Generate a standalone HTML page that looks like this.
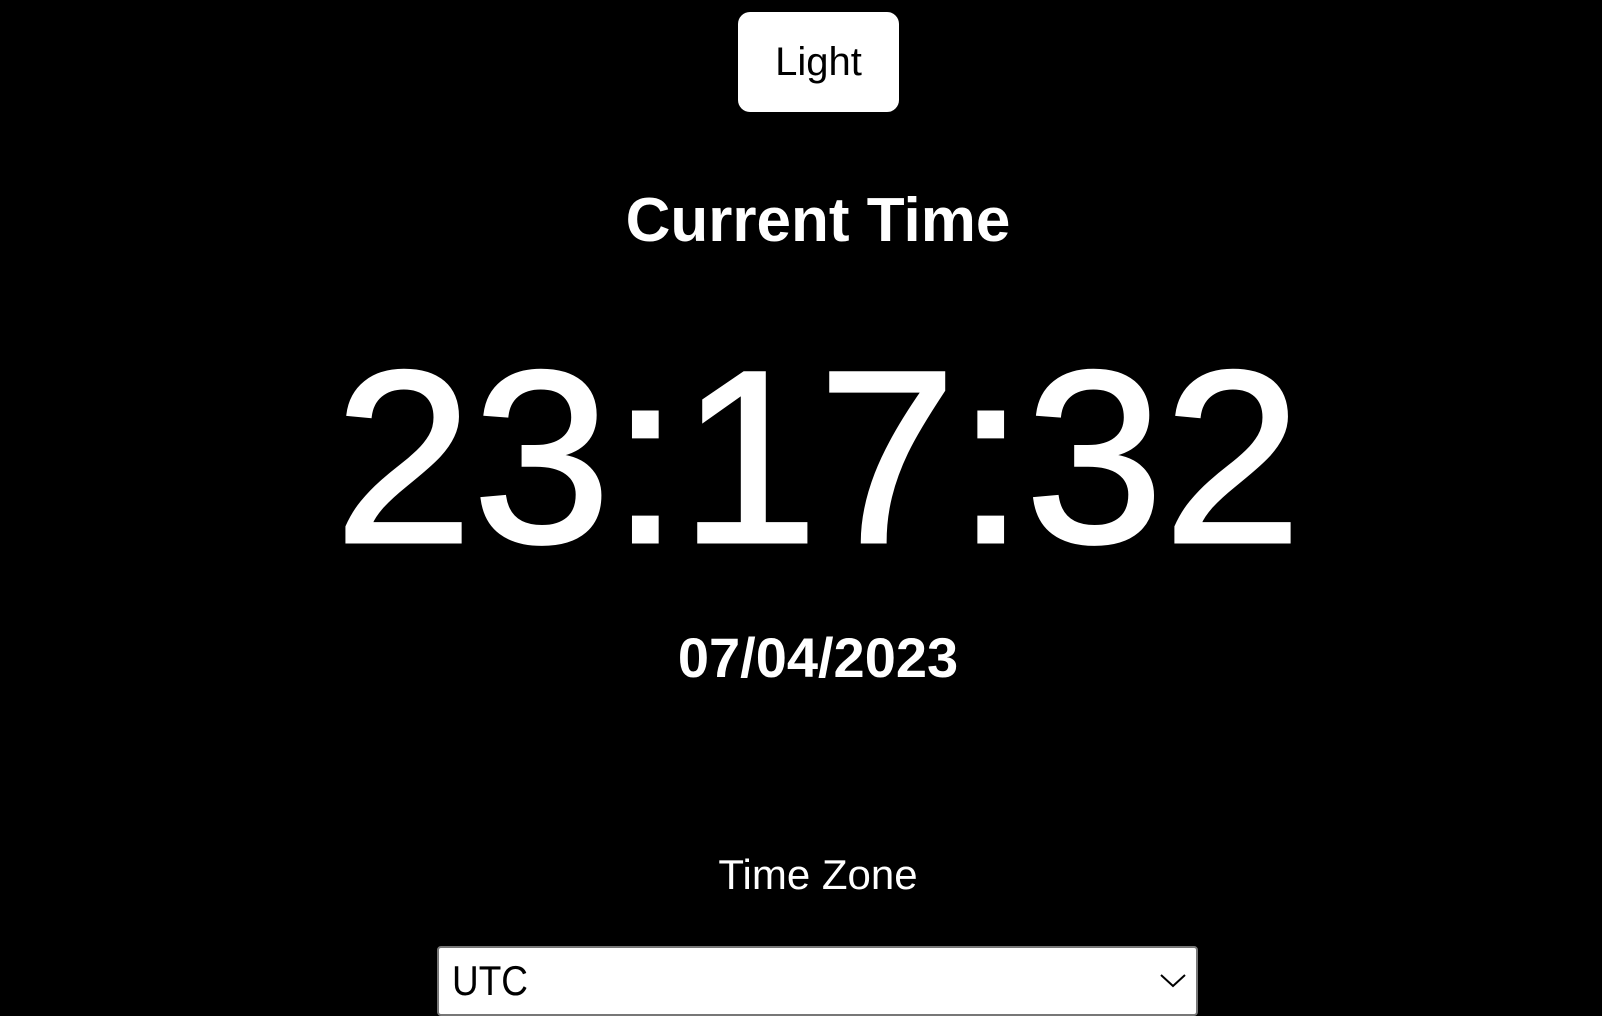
<!DOCTYPE html>
<html><head><style>
html,body{margin:0;padding:0;background:#000;width:1602px;height:1011px;overflow:hidden;font-family:"Liberation Sans",sans-serif;color:#fff}
.a{position:absolute;left:0;width:1636px;text-align:center;line-height:1;white-space:nowrap}
#btn{position:absolute;left:738px;top:12px;width:161px;height:100px;background:#fff;border-radius:12px;color:#000;font-size:40px;line-height:100px;text-align:center}
#sel{position:absolute;left:437px;top:946px;width:761px;height:70px;background:#fff;border:2px solid #777;border-radius:4px;box-sizing:border-box}
</style></head><body>
<div id="btn">Light</div>
<div class="a" style="top:190px;font-size:62px;font-weight:bold">Current Time</div>
<div class="a" style="top:335px;font-size:246px;transform:scaleX(1.01);transform-origin:815px 0;-webkit-text-stroke:3px #fff">23:17:32</div>
<div class="a" style="top:630px;font-size:56px;font-weight:bold">07/04/2023</div>
<div class="a" style="top:854px;font-size:42px">Time Zone</div>
<div id="sel">
<div style="position:absolute;left:13px;top:12px;font-size:42px;line-height:1;color:#000;transform:scaleX(0.88);transform-origin:0 0">UTC</div>
<svg style="position:absolute;left:720px;top:22px" width="28" height="20" viewBox="0 0 28 20"><path d="M2 5 L14 16 L26 5" fill="none" stroke="#000" stroke-width="2"/></svg>
</div>
</body></html>
